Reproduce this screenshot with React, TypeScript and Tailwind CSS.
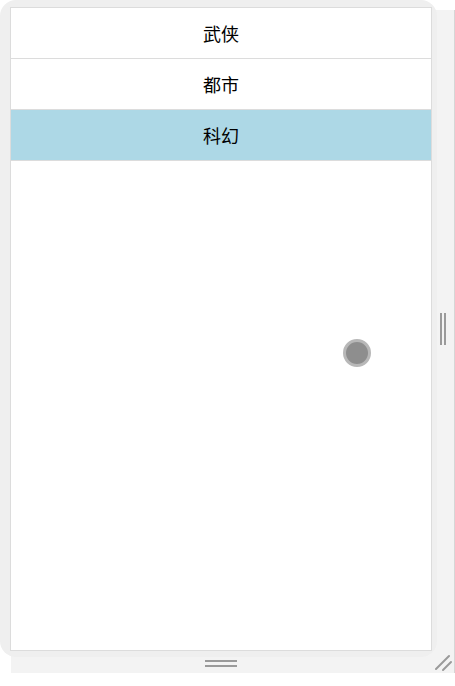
import React from 'react';

const genres = ['武侠', '都市', '科幻'];

export default function App() {
  const active = 2;

  return (
    <div className="relative w-[455px] h-[686px] bg-white" style={{ fontFamily: '"Noto Sans CJK SC", "Noto Sans", sans-serif' }}>
      {/* Resizer backing */}
      <div className="absolute left-[11px] top-[10px] w-[444px] h-[663px] bg-[#f3f3f3] border-r border-[#d6d6d6]">
        <div className="absolute left-[429px] top-[303px] flex gap-[2px]">
          <span className="w-[2px] h-[32px] bg-[#9a9a9a]" />
          <span className="w-[2px] h-[32px] bg-[#9a9a9a]" />
        </div>
        <div className="absolute left-[194px] top-[650px] flex flex-col gap-[3px]">
          <span className="w-[32px] h-[2px] bg-[#9a9a9a]" />
          <span className="w-[32px] h-[2px] bg-[#9a9a9a]" />
        </div>
        <svg className="absolute left-[424px] top-[644px]" width="18" height="18" viewBox="0 0 18 18">
          <line x1="1" y1="15" x2="14" y2="2" stroke="#9a9a9a" strokeWidth="2" strokeLinecap="round" />
          <line x1="8" y1="16" x2="16" y2="8" stroke="#9a9a9a" strokeWidth="2" strokeLinecap="round" />
        </svg>
      </div>

      {/* Device frame */}
      <div className="relative z-10 w-[437px] h-[657px] rounded-[16px] bg-[#efefef] pl-[10px] pt-[7px]">
        <div className="w-[422px] h-[644px] bg-white border border-[#dcdcdc] flex flex-col">
          {genres.map((g, i) => (
            <div
              key={g}
              className={`h-[51px] shrink-0 flex items-center justify-center text-[18px] text-black border-b border-[#dcdcdc] ${
                i === active ? 'bg-[#add8e6]' : 'bg-white'
              }`}
            >
              {g}
            </div>
          ))}
        </div>
      </div>

      {/* Touch cursor */}
      <div className="absolute z-20 left-[343px] top-[339px] w-[28px] h-[28px] rounded-full bg-[#8e8e8e] border-[3px] border-[#b8b8b8]" />
    </div>
  );
}
